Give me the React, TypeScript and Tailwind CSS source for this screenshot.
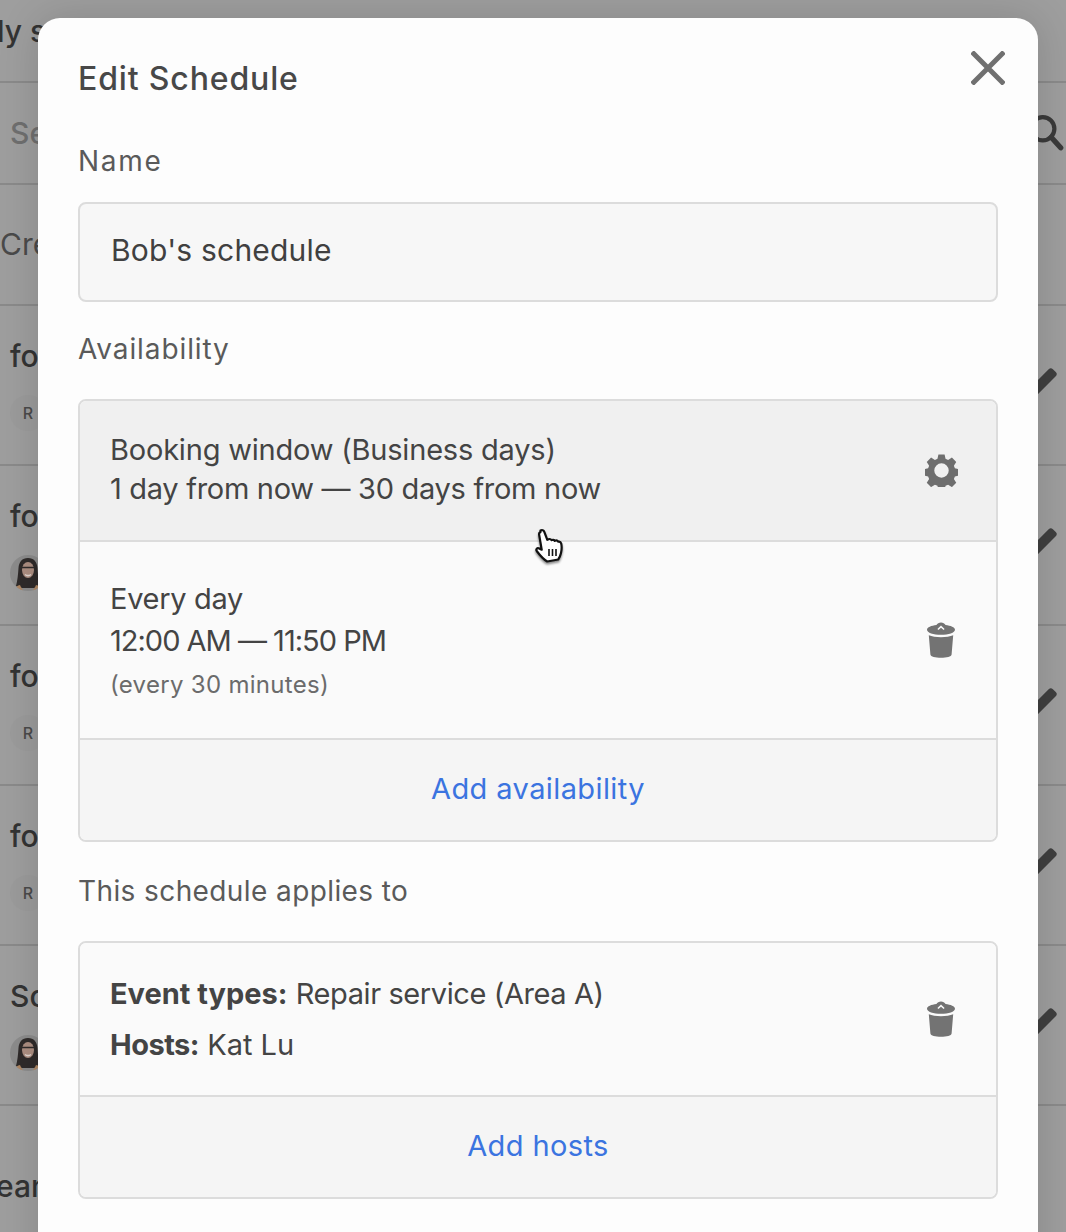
import type { ReactNode } from 'react';

const FONT = "font-['Inter','Noto_Sans',sans-serif]";

function TrashIcon() {
  return (
    <svg viewBox="0 0 30 36" className="h-[36px] w-[30px] fill-[#737373]">
      <path d="M15 0.5c2 0 3.6 1 4.6 2.6 5 0.6 9.4 2.2 9.4 4.7 0 3-6.4 5-14 5S1 10.800 1 7.800c0-2.500 4.400-4.100 9.400-4.700C11.400 1.500 13 0.500 15 0.500z" />
      <path d="M15 3.600l-3.600 3.400 1 1 2.600-2.300 2.600 2.300 1-1z" fill="#fafafa" />
      <path d="M2.800 13.200c3 1.300 7.400 2 12.200 2s9.200-0.700 12.200-2l-1.600 19.300c-0.200 2.100-5 3.300-10.600 3.300S4.600 34.600 4.400 32.500z" />
    </svg>
  );
}

function GearIcon() {
  return (
    <svg viewBox="0 0 32 32" className="-mr-[2px] h-[33px] w-[33px] fill-[#6e6e6e]">
      <path
        fillRule="evenodd"
        d="M13 0.500h6l0.900 4.200 2.500 1.100 3.700-2.300 4.200 4.200-2.300 3.700 1 2.500 4.200 0.900v6l-4.200 0.900-1 2.500 2.300 3.700-4.200 4.200-3.700-2.300-2.500 1-0.900 4.200h-6l-0.900-4.200-2.500-1-3.700 2.300-4.200-4.200 2.300-3.700-1-2.500-4.200-0.900v-6l4.200-0.900 1-2.500-2.300-3.700 4.200-4.200 3.700 2.300 2.500-1.100zM16 9a7 7 0 1 0 0 14a7 7 0 0 0 0-14z"
      />
    </svg>
  );
}

function HandCursor() {
  return (
    <svg viewBox="0 0 32 36" className="absolute left-[534px] top-[528px] h-[36px] w-[32px] drop-shadow-[0_2px_1px_rgba(0,0,0,0.45)]">
      <path
        d="M6.500 2.500c1.500-1 3.200-0.300 3.800 1.300l3 8 1.300-0.600c1.300-0.500 2.300 0 3 1 1-0.700 2.500-0.500 3.200 0.600 1.200-0.700 2.800-0.300 3.500 0.900 1.200-0.300 2.500 0.300 2.900 1.800 0.600 2.500 0.600 6-0.200 9.500-0.600 2.700-1.500 4.700-2.800 6.500l-11 2c-3-1.700-7-5.800-10.500-10.500-1-1.500 0.300-3.300 2-2.800l3 1.500-2.600-15.200c-0.200-0.900 0.100-1.700 1.400-2.500z"
        fill="#fff"
        stroke="#111"
        strokeWidth="2.200"
        strokeLinejoin="round"
      />
      <path d="M15 21v7M18.500 21v7M22 21v7" stroke="#111" strokeWidth="1.600" />
    </svg>
  );
}

function Avatar() {
  return (
    <svg viewBox="0 0 36 36" className="h-[36px] w-[36px] rounded-full bg-[#8c8c8c]">
      <path d="M18 3c6 0 9 4 9.500 10 0.500 7 1 12 2.500 18l-6 2H12l-6-2c1.500-6 2-11 2.500-18C9 7 12 3 18 3z" fill="#2f2b2a" />
      <ellipse cx="18" cy="15" rx="6" ry="8" fill="#ad8f82" />
      <path d="M11.500 12.500h13" stroke="#2f2b2a" strokeWidth="1.500" />
      <path d="M15 19.500c2 1.500 4 1.500 6 0" stroke="#e2d8d2" strokeWidth="1.500" fill="none" />
      <path d="M5 36c0.500-4 2.500-6 5-6 1 3 3 4 3 6zM31 36c-0.500-4-2.500-6-5-6-1 3-3 4-3 6z" fill="#b08864" />
    </svg>
  );
}

function ListRow({ title, badge, avatar }: { title: string; badge?: boolean; avatar?: boolean }) {
  return (
    <div className="flex h-[160px] flex-col border-b-2 border-[#8a8a8a] pl-[10px] pt-[30px]">
      <div className="text-[30px] font-medium leading-[40px] text-[#333]">{title}</div>
      {badge && (
        <div className="mt-[19px] flex h-[36px] w-[36px] items-center justify-center rounded-full bg-[#9b9b9b] text-[16px] font-medium text-[#4a4a4a]">
          R
        </div>
      )}
      {avatar && (
        <div className="mt-[19px]">
          <Avatar />
        </div>
      )}
    </div>
  );
}

function BoxRow({ bg, height, border, children }: { bg: string; height: string; border?: boolean; children: ReactNode }) {
  return (
    <div className={`flex items-center justify-between pl-[30px] pr-[40px] ${bg} ${height} ${border ? 'border-b-2 border-[#dcdcdc]' : ''}`}>
      {children}
    </div>
  );
}

function AddRow({ height, label }: { height: string; label: string }) {
  return (
    <div className={`flex items-center justify-center bg-[#f5f5f5] pb-[2px] text-[29px] tracking-[0.4px] text-[#3b74e0] ${height}`}>
      {label}
    </div>
  );
}

function Label({ className, children }: { className: string; children: ReactNode }) {
  return <div className={`text-[28px] leading-[36px] text-[#5a5a5a] ${className}`}>{children}</div>;
}

export default function App() {
  return (
    <div className={`relative h-[1232px] w-[1066px] overflow-hidden bg-[#9e9e9e] ${FONT}`}>
      {/* page behind the dialog */}
      <div className="flex flex-col">
        <div className="h-[83px] border-b-2 border-[#8a8a8a] pt-[11px] text-[30px] font-medium leading-[40px] text-[#333]">
          <span className="-ml-[3px]">ly s</span>
        </div>
        <div className="flex h-[102px] items-center justify-between border-b-2 border-[#8a8a8a] pl-[10px] pr-[2px]">
          <span className="text-[30px] font-medium text-[#6f6f6f]">Se</span>
          <svg viewBox="0 0 32 36" className="h-[38px] w-[34px] fill-none stroke-[#3a3a3a]">
            <circle cx="12" cy="14" r="11" strokeWidth="4" />
            <path d="M20 22l9 10" strokeWidth="5" strokeLinecap="round" />
          </svg>
        </div>
        <div className="flex h-[121px] items-center border-b-2 border-[#8a8a8a] text-[30px] text-[#4a4a4a]">Cre</div>
        <ListRow title="fo" badge />
        <ListRow title="fo" avatar />
        <ListRow title="fo" badge />
        <ListRow title="fo" badge />
        <ListRow title="So" avatar />
        <div className="flex h-[160px] items-center text-[30px] font-medium text-[#333]">
          <span className="-ml-[4px]">ean</span>
        </div>
      </div>

      {/* pencil tips peeking out to the right of the dialog */}
      {[370, 530, 690, 850, 1010].map((top) => (
        <div key={top} className="absolute left-[1027px] h-[10px] w-[32px] -rotate-45 rounded-[3px] bg-[#3f3f3f]" style={{ top: top + 7 }} />
      ))}

      {/* dialog */}
      <div className="absolute left-[38px] top-[18px] h-[1300px] w-[1000px] rounded-[22px] bg-[#fdfdfd] px-[40px] pt-[41px] shadow-[0_0_40px_rgba(0,0,0,0.15)]">
        <button className="absolute right-[33px] top-[33px]">
          <svg viewBox="0 0 34 34" className="h-[34px] w-[34px] stroke-[#707070]" strokeWidth="5">
            <path d="M1 1l32 32M33 1L1 33" />
          </svg>
        </button>

        <div className="text-[32px] font-medium leading-[40px] tracking-[0.85px] text-[#484848]">Edit Schedule</div>
        <Label className="mt-[44px] tracking-[1.7px]">Name</Label>

        <div className="mt-[23px] flex h-[100px] items-center rounded-[8px] border-2 border-[#dcdcdc] bg-[#f7f7f7] pb-[3px] pl-[31px] text-[30px] tracking-[0.2px] text-[#404040]">
          Bob's schedule
        </div>

        <Label className="mt-[29px] tracking-[0.9px]">Availability</Label>

        <div className="mt-[32px] overflow-hidden rounded-[8px] border-2 border-[#dcdcdc]">
          <BoxRow bg="bg-[#f0f0f0]" height="h-[141px]" border>
            <div className="pb-[4px] text-[29px] leading-[39px] text-[#444]">
              <div className="tracking-[-0.2px]">Booking window (Business days)</div>
              <div className="tracking-[-0.3px]">1 day from now — 30 days from now</div>
            </div>
            <GearIcon />
          </BoxRow>
          <BoxRow bg="bg-[#fafafa]" height="h-[198px]" border>
            <div className="pt-[2px] text-[#444]">
              <div className="text-[29px] leading-[40px] tracking-[-0.3px]">Every day</div>
              <div className="mt-[2px] text-[29px] leading-[40px] tracking-[-1px]">12:00 AM — 11:50 PM</div>
              <div className="mt-[6px] text-[24px] leading-[36px] tracking-[0.3px] text-[#6b6b6b]">(every 30 minutes)</div>
            </div>
            <TrashIcon />
          </BoxRow>
          <AddRow height="h-[100px]" label="Add availability" />
        </div>

        <Label className="mt-[31px] tracking-[0.4px]">This schedule applies to</Label>

        <div className="mt-[32px] overflow-hidden rounded-[8px] border-2 border-[#dcdcdc]">
          <BoxRow bg="bg-[#fafafa]" height="h-[154px]" border>
            <div className="text-[29px] text-[#444]">
              <div className="leading-[40px]">
                <span className="font-bold">Event types:</span> <span className="tracking-[-0.4px]">Repair service (Area A)</span>
              </div>
              <div className="mt-[11px] leading-[40px]">
                <span className="font-bold tracking-[-0.5px]">Hosts:</span> Kat Lu
              </div>
            </div>
            <TrashIcon />
          </BoxRow>
          <AddRow height="h-[100px]" label="Add hosts" />
        </div>
      </div>

      <HandCursor />
    </div>
  );
}
